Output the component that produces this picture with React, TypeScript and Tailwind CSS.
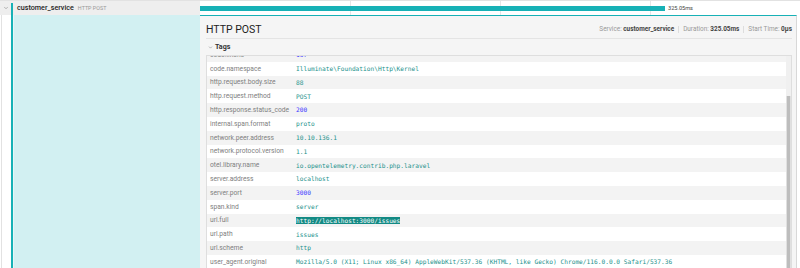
import { ChevronDown } from "lucide-react"

type Tag = { k: string; v: string; kind?: "num" | "sel" }

const tags: Tag[] = [
  { k: "code.lineno", v: "137", kind: "num" },
  { k: "code.namespace", v: "Illuminate\\Foundation\\Http\\Kernel" },
  { k: "http.request.body.size", v: "88" },
  { k: "http.request.method", v: "POST" },
  { k: "http.response.status_code", v: "200", kind: "num" },
  { k: "internal.span.format", v: "proto" },
  { k: "network.peer.address", v: "10.10.136.1" },
  { k: "network.protocol.version", v: "1.1" },
  { k: "otel.library.name", v: "io.opentelemetry.contrib.php.laravel" },
  { k: "server.address", v: "localhost" },
  { k: "server.port", v: "3000", kind: "num" },
  { k: "span.kind", v: "server" },
  { k: "url.full", v: "http://localhost:3000/issues", kind: "sel" },
  { k: "url.path", v: "issues" },
  { k: "url.scheme", v: "http" },
  {
    k: "user_agent.original",
    v: "Mozilla/5.0 (X11; Linux x86_64) AppleWebKit/537.36 (KHTML, like Gecko) Chrome/116.0.0.0 Safari/537.36",
  },
]

function TagValue({ tag }: { tag: Tag }) {
  if (tag.kind === "num") return <span className="text-[#3a3aff]">{tag.v}</span>
  if (tag.kind === "sel") return <span className="bg-[#138a84] text-white">{tag.v}</span>
  return <span className="text-[#1c928c]">{tag.v}</span>
}

export default function App() {
  return (
    <div className="w-[800px] h-[268px] overflow-hidden bg-white font-['Roboto',sans-serif] text-[#333]">
      {/* span row */}
      <div className="flex h-[15px] border-t border-[#e2e2e2]">
        <div className="flex w-[200px] bg-[#eeeeee]">
          <div className="w-[11px] flex items-center justify-center text-[#777]">
            <ChevronDown size={6} strokeWidth={2} />
          </div>
          <div className="w-[2px] mt-[2px] bg-[#17b1b6]" />
          <div className="flex items-center gap-[4px] pl-[4px]">
            <span className="text-[7.2px] font-medium text-[#222]">customer_service</span>
            <span className="text-[5.4px] text-[#999]">HTTP POST</span>
          </div>
        </div>
        <div className="relative w-[600px]">
          <div className="absolute left-[150px] top-0 h-full w-px bg-[#e6e6e6]" />
          <div className="absolute left-[300px] top-0 h-full w-px bg-[#e6e6e6]" />
          <div className="absolute left-[450px] top-0 h-full w-px bg-[#e6e6e6]" />
          <div className="absolute left-0 top-[4.5px] h-[5px] w-[465px] bg-[#17b1b6]" />
          <span className="absolute left-[468px] top-[3px] text-[5.6px] text-[#444] leading-[8px]">325.05ms</span>
        </div>
      </div>

      {/* detail row */}
      <div className="flex h-[253px]">
        <div className="flex w-[200px]">
          <div className="w-[11px] bg-white pl-px">
            <div className="h-full w-px bg-[#e2e2e2]" />
          </div>
          <div className="w-[2px] bg-[#17b1b6]" />
          <div className="w-px bg-[#e6f7f8]" />
          <div className="flex-1 bg-[#d2f0f2]" />
        </div>
        <div className="flex w-[600px]">
          <div className="flex w-[597px] flex-col border-t border-r border-[#17b1b6] border-r-[#d8d8d8] bg-[#f5f5f5] pl-[6px] pr-[4px]">
            <div className="flex h-[23px] items-center justify-between border-b border-[#e4e4e4] pt-[6px]">
              <span className="text-[10.5px] text-[#222]">HTTP POST</span>
              <div className="flex items-center text-[6.4px] text-[#999]">
                <span>
                  Service: <b className="font-bold text-[#444]">customer_service</b>
                </span>
                <span className="mx-[4px] h-[7px] w-px bg-[#ddd]" />
                <span>
                  Duration: <b className="font-bold text-[#444]">325.05ms</b>
                </span>
                <span className="mx-[4px] h-[7px] w-px bg-[#ddd]" />
                <span>
                  Start Time: <b className="font-bold text-[#444]">0μs</b>
                </span>
              </div>
            </div>
            <div className="flex h-[16px] items-center gap-[2px] pl-[2px]">
              <ChevronDown size={5} strokeWidth={2} className="text-[#666]" />
              <span className="text-[7.1px] font-bold text-[#333]">Tags</span>
            </div>
            <div className="flex flex-1 min-h-0 border-t border-l border-r border-[#dedede]">
              <div className="flex-1 overflow-hidden bg-white">
                <div className="-mt-[8px]">
                  {tags.map((t, i) => (
                    <div
                      key={t.k}
                      className={`flex h-[13.8px] items-center ${i % 2 === 0 ? "bg-[#f3f3f3]" : "bg-white"}`}
                    >
                      <div className="w-[89px] shrink-0 pl-[3px] text-[6.7px] text-[#808080]">{t.k}</div>
                      <div className="whitespace-nowrap font-['DejaVu_Sans_Mono',monospace] text-[6.2px]">
                        <TagValue tag={t} />
                      </div>
                    </div>
                  ))}
                </div>
              </div>
              <div className="flex w-[5px] flex-col bg-[#f0f0f0]">
                <div className="h-[40px]" />
                <div className="flex-1 border-x border-[#e0e0e0] bg-[#bdbdbd]" />
              </div>
            </div>
          </div>
          <div className="w-[3px] bg-white" />
        </div>
      </div>
    </div>
  )
}
